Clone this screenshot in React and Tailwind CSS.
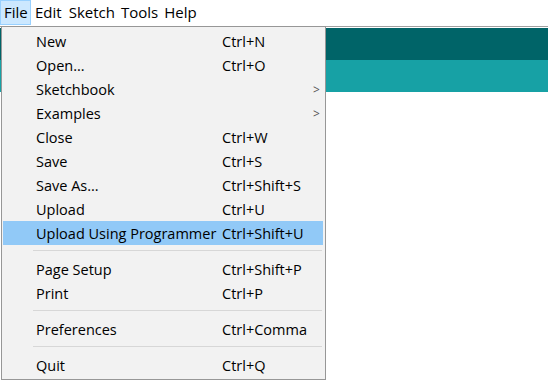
import React from 'react';

const items = [
  { label: 'New', key: 'Ctrl+N' },
  { label: 'Open...', key: 'Ctrl+O' },
  { label: 'Sketchbook', sub: true },
  { label: 'Examples', sub: true },
  { label: 'Close', key: 'Ctrl+W' },
  { label: 'Save', key: 'Ctrl+S' },
  { label: 'Save As...', key: 'Ctrl+Shift+S' },
  { label: 'Upload', key: 'Ctrl+U' },
  { label: 'Upload Using Programmer', key: 'Ctrl+Shift+U', active: true },
  { sep: true },
  { label: 'Page Setup', key: 'Ctrl+Shift+P' },
  { label: 'Print', key: 'Ctrl+P' },
  { sep: true },
  { label: 'Preferences', key: 'Ctrl+Comma' },
  { sep: true },
  { label: 'Quit', key: 'Ctrl+Q' },
];

function MenuRow({ item }) {
  if (item.sep) {
    return (
      <div className="h-[12px] pt-[5px] pl-[31px] pr-[3px]">
        <div className="h-px bg-[#d7d7d7]" />
      </div>
    );
  }
  return (
    <div
      className={`h-[24px] pt-[2px] flex items-center whitespace-nowrap ml-[1px] mr-[2px] ${item.active ? 'bg-[#91c9f7]' : ''}`}
    >
      <span className="w-[219px] pl-[33px] shrink-0">{item.label}</span>
      <span className="flex-1">{item.key}</span>
      {item.sub && <span className="w-[10px] text-[12px] text-[#555]">&gt;</span>}
    </div>
  );
}

export default function App() {
  return (
    <div
      className="relative w-[548px] h-[382px] bg-white overflow-hidden text-[14.5px] text-black"
      style={{ fontFamily: '"Open Sans", "Noto Sans", sans-serif' }}
    >
      {/* Menu bar */}
      <div className="h-[26px] flex items-start text-[15px]">
        <div className="w-[31px] pl-[3px] flex items-center bg-[#cce8ff] border border-[#99d1ff] h-[25px]">File</div>
        <div className="px-[4px] flex items-center h-[25px]">Edit</div>
        <div className="px-[3px] flex items-center h-[25px]">Sketch</div>
        <div className="px-[3px] flex items-center h-[25px]">Tools</div>
        <div className="px-[3px] flex items-center h-[25px]">Help</div>
      </div>

      {/* Editor window behind */}
      <div className="border-t border-[#a0a0a0] pt-px">
        <div className="h-[32px] bg-[#006468]" />
        <div className="h-[32px] bg-[#17a1a5]" />
      </div>

      {/* Dropdown */}
      <div className="absolute left-[1px] top-[26px] w-[325px] h-[354px] bg-[#f2f2f2] border border-[#979797] pt-[2px]">
        {items.map((item, i) => (
          <MenuRow key={i} item={item} />
        ))}
      </div>
    </div>
  );
}
